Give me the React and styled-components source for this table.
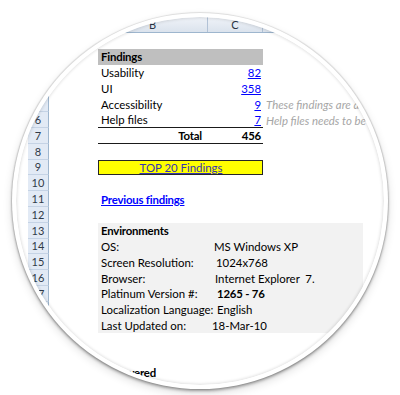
import React from "react";
import styled, { createGlobalStyle } from "styled-components";

// column track widths: row head, A, B, C, D, E
const COLS = "21px 49px 110px 55px 100px 100px";

const GlobalStyle = createGlobalStyle`
  html, body {
    margin: 0;
    padding: 0;
    background: #fff;
  }
  body {
    font-family: Lato, "Liberation Sans", sans-serif;
  }
`;

const Page = styled.div`
  box-sizing: border-box;
  width: 400px;
  height: 395px;
  overflow: hidden;
  display: flex;
  align-items: flex-start;
  padding: 13px 0 0 12px;
  background: #fff;
`;

const Lens = styled.div`
  box-sizing: border-box;
  flex: none;
  width: 376px;
  height: 376px;
  padding: 4px;
  border-radius: 50%;
  background: #fff;
  box-shadow: 0 0 1px 1px rgba(0, 0, 0, 0.1), 0 2px 3px rgba(0, 0, 0, 0.32),
    0 4px 10px rgba(0, 0, 0, 0.14);
`;

const Glass = styled.div`
  position: relative;
  width: 100%;
  height: 100%;
  border-radius: 50%;
  overflow: hidden;
  background: #fff;
`;

const Shine = styled.div`
  position: absolute;
  inset: 0;
  border-radius: 50%;
  box-shadow: inset 0 0 3px 1px rgba(0, 0, 0, 0.12);
  pointer-events: none;
`;

const Sheet = styled.div`
  width: 440px;
  margin: -1px 0 0 12px;
  font-size: 11.4px;
  color: #000;
`;

const HeaderRow = styled.div`
  box-sizing: border-box;
  display: grid;
  grid-template-columns: ${COLS};
  height: 17.2px;
  background: linear-gradient(#f1f4f9, #dbe3ed);
  border-bottom: 1px solid #9eb6ce;
`;

const ColHead = styled.div`
  display: flex;
  align-items: center;
  justify-content: center;
  border-right: 1px solid #b2c2d6;
  font-size: 11px;
  color: #2a3444;
`;

const Row = styled.div`
  display: grid;
  grid-template-columns: ${COLS};
  height: 15.8px;
`;

const RowHead = styled.div`
  box-sizing: border-box;
  display: flex;
  align-items: center;
  justify-content: center;
  background: #e2eaf5;
  border-right: 1px solid #9eb6ce;
  border-bottom: 1px solid #c5d3e5;
  font-size: 11px;
  color: #303a48;
`;

const Cell = styled.div`
  box-sizing: border-box;
  grid-column: ${({ $col }) => $col};
  min-width: 0;
  display: flex;
  align-items: center;
  justify-content: ${({ $align }) =>
    $align === "right" ? "flex-end" : $align === "center" ? "center" : "flex-start"};
  padding: 0 ${({ $pr = 2 }) => $pr}px 0 ${({ $pl = 3 }) => $pl}px;
  white-space: nowrap;
  font-weight: ${({ $bold }) => ($bold ? 700 : 400)};
  letter-spacing: ${({ $bold }) => ($bold ? "-0.2px" : "0")};
  border-bottom: ${({ $rule }) => ($rule ? "1px solid #1a1a1a" : "none")};
`;

const Band = styled(Cell)`
  background: #bfbfbf;
`;

const Note = styled(Cell)`
  font-style: italic;
  color: #a6a6a6;
`;

const TopBox = styled(Cell)`
  background: #ffff00;
  border: 1px solid #262626;
`;

const BoxLink = styled.span`
  color: #3434b4;
  text-decoration: underline;
`;

const NumLink = styled.span`
  color: #0000ff;
  text-decoration: underline;
`;

const PageLink = styled(Cell)`
  color: #0000ff;
  text-decoration: underline;
`;

const EnvPanel = styled.div`
  grid-column: 3 / 6;
  display: grid;
  grid-template-columns: 110px 1fr;
  background: #f2f2f2;
  font-weight: ${({ $bold }) => ($bold ? 700 : 400)};
  letter-spacing: ${({ $bold }) => ($bold ? "-0.2px" : "0")};
`;

const EnvLabel = styled.div`
  display: flex;
  align-items: center;
  padding-left: 3px;
  white-space: nowrap;
  min-width: 0;
`;

const EnvValue = styled.div`
  display: flex;
  align-items: center;
  padding-left: ${({ $indent = 4 }) => $indent}px;
  white-space: pre;
  font-weight: ${({ $bold }) => ($bold ? 700 : 400)};
  letter-spacing: ${({ $bold }) => ($bold ? "-0.2px" : "0")};
`;

const Line = ({ n, children }) => (
  <Row>
    <RowHead>{n}</RowHead>
    {children}
  </Row>
);

const environment = [
  ["OS:", "MS Windows XP", 6],
  ["Screen Resolution:", "1024x768", 8],
  ["Browser:", "Internet Explorer  7.", 7],
  ["Platinum Version #:", "1265 - 76", 9, true],
  ["Localization Language:", "English", 9],
  ["Last Updated on:", "18-Mar-10", 4],
];

export default function App() {
  return (
    <>
      <GlobalStyle />
      <Page>
        <Lens>
          <Glass>
            <Sheet>
              <HeaderRow>
                <ColHead />
                <ColHead>A</ColHead>
                <ColHead>B</ColHead>
                <ColHead>C</ColHead>
                <ColHead>D</ColHead>
                <ColHead>E</ColHead>
              </HeaderRow>
              <Line n={1} />
              <Line n={2}>
                <Band $col="3 / 5" $bold>
                  Findings
                </Band>
              </Line>
              <Line n={3}>
                <Cell $col="3">Usability</Cell>
                <Cell $col="4" $align="right">
                  <NumLink>82</NumLink>
                </Cell>
              </Line>
              <Line n={4}>
                <Cell $col="3">UI</Cell>
                <Cell $col="4" $align="right">
                  <NumLink>358</NumLink>
                </Cell>
              </Line>
              <Line n={5}>
                <Cell $col="3">Accessibility</Cell>
                <Cell $col="4" $align="right">
                  <NumLink>9</NumLink>
                </Cell>
                <Note $col="5">These findings are assigned to the next build</Note>
              </Line>
              <Line n={6}>
                <Cell $col="3" $rule>
                  Help files
                </Cell>
                <Cell $col="4" $align="right" $rule>
                  <NumLink>7</NumLink>
                </Cell>
                <Note $col="5">Help files needs to be updated</Note>
              </Line>
              <Line n={7}>
                <Cell $col="3" $align="right" $pr={6} $bold $rule>
                  Total
                </Cell>
                <Cell $col="4" $align="right" $bold $rule>
                  456
                </Cell>
              </Line>
              <Line n={8} />
              <Line n={9}>
                <TopBox $col="3 / 5" $align="center">
                  <BoxLink>TOP 20 Findings</BoxLink>
                </TopBox>
              </Line>
              <Line n={10} />
              <Line n={11}>
                <PageLink $col="3 / 5" $bold>
                  Previous findings
                </PageLink>
              </Line>
              <Line n={12} />
              <Line n={13}>
                <EnvPanel $bold>
                  <EnvLabel>Environments</EnvLabel>
                </EnvPanel>
              </Line>
              {environment.map(([label, value, indent, bold], i) => (
                <Line n={14 + i} key={label}>
                  <EnvPanel>
                    <EnvLabel>{label}</EnvLabel>
                    <EnvValue $indent={indent} $bold={bold}>
                      {value}
                    </EnvValue>
                  </EnvPanel>
                </Line>
              ))}
              <Line n={20} />
              <Line n={21} />
              <Line n={22}>
                <Cell $col="3 / 5" $bold>
                  UI Covered
                </Cell>
              </Line>
              <Line n={23} />
            </Sheet>
            <Shine />
          </Glass>
        </Lens>
      </Page>
    </>
  );
}
